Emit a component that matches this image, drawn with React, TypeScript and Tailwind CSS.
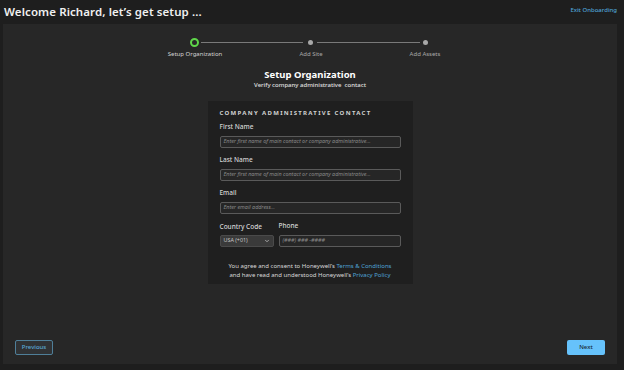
import { ChevronDown } from "lucide-react";

const font = { fontFamily: '"Noto Sans", "Open Sans", sans-serif' };

function Field({ label, placeholder }: { label: string; placeholder: string }) {
  return (
    <div className="flex flex-col">
      <label className="text-[6.5px] text-[#d6d6d6] font-medium h-[8px] leading-[8px]">{label}</label>
      <div className="mt-[5px] h-[12px] rounded-[2px] border border-[#5a5a5a] bg-[#262626] px-[3px] flex items-center">
        <span className="text-[5.4px] italic text-[#8a8a8a] leading-none">{placeholder}</span>
      </div>
    </div>
  );
}

export default function App() {
  return (
    <div style={font} className="w-[624px] h-[370px] bg-[#1e1e1e] flex flex-col overflow-hidden">
      <header className="h-[24px] flex items-center justify-between pl-[4px] pr-[7px]">
        <h1 className="text-[11.5px] font-semibold text-[#f0f0f0] tracking-[0.1px]">
          Welcome Richard, let’s get setup ...
        </h1>
        <a className="text-[6px] font-medium text-[#4fa3d6] mt-[-3px]">Exit Onboarding</a>
      </header>

      <main className="ml-[3px] mr-[7px] h-[340px] bg-[#272727] flex flex-col relative">
        {/* stepper */}
        <div className="mt-[14px] flex justify-center">
          <div className="relative w-[300px] h-[24px]">
            <div className="absolute left-[41px] top-[4px] w-[102px] h-px bg-[#7a7a7a]" />
            <div className="absolute left-[157px] top-[4px] w-[103px] h-px bg-[#7a7a7a]" />
            <div className="absolute left-[30px] top-0 w-[9px] h-[9px] rounded-full border-[2px] border-[#5fd64a] bg-[#272727]" />
            <div className="absolute left-[148px] top-[2px] w-[5px] h-[5px] rounded-full bg-[#a8a8a8]" />
            <div className="absolute left-[263px] top-[2px] w-[5px] h-[5px] rounded-full bg-[#a8a8a8]" />
            <span className="absolute top-[12px] left-[-5px] w-[80px] text-center text-[6px] text-[#d4d4d4]">Setup Organization</span>
            <span className="absolute top-[12px] left-[111px] w-[80px] text-center text-[6px] text-[#a8a8a8]">Add Site</span>
            <span className="absolute top-[12px] left-[225px] w-[80px] text-center text-[6px] text-[#a8a8a8]">Add Assets</span>
          </div>
        </div>

        <div className="mt-[7px] flex flex-col items-center">
          <h2 className="text-[9.5px] font-bold text-white leading-[12px]">Setup Organization</h2>
          <p className="text-[6px] font-medium text-[#e0e0e0] leading-[9px]">Verify company administrative&nbsp; contact</p>
        </div>

        {/* card */}
        <div className="mt-[11px] self-center w-[205px] h-[183px] bg-[#1f1f1f] px-[12px] pt-[8px] flex flex-col">
          <h3 className="text-[6px] font-bold tracking-[0.22em] text-[#d0d0d0] leading-[8px]">
            COMPANY ADMINISTRATIVE CONTACT
          </h3>
          <div className="mt-[6px] flex flex-col gap-[8px]">
            <Field label="First Name" placeholder="Enter first name of main contact or company administrative..." />
            <Field label="Last Name" placeholder="Enter first name of main contact or company administrative..." />
            <Field label="Email" placeholder="Enter email address..." />
            <div className="flex gap-[5px]">
              <div className="flex flex-col w-[54px]">
                <label className="text-[6.5px] text-[#d6d6d6] font-medium h-[8px] leading-[8px] mt-[1px]">Country Code</label>
                <div className="mt-[4px] h-[12px] rounded-[2px] bg-[#3a3a3a] border border-[#4a4a4a] px-[3px] flex items-center justify-between">
                  <span className="text-[5.4px] text-[#c8c8c8] leading-none">USA (+01)</span>
                  <ChevronDown className="w-[6px] h-[6px] text-[#c8c8c8]" strokeWidth={3} />
                </div>
              </div>
              <div className="flex flex-col flex-1">
                <label className="text-[6.5px] text-[#d6d6d6] font-medium h-[8px] leading-[8px]">Phone</label>
                <div className="mt-[5px] h-[12px] rounded-[2px] border border-[#5a5a5a] bg-[#262626] px-[3px] flex items-center">
                  <span className="text-[5.4px] italic text-[#8a8a8a] leading-none">(###) ### -####</span>
                </div>
              </div>
            </div>
          </div>
          <p className="mt-[15px] text-center text-[6px] leading-[8.5px] text-[#d8d8d8]">
            You agree and consent to Honeywell’s <span className="text-[#4fa3d6]">Terms &amp; Conditions</span>
            <br />
            and have read and understood Honeywell’s <span className="text-[#4fa3d6]">Privacy Policy</span>
          </p>
        </div>

        <div className="mt-auto mb-[9px] px-[12px] flex justify-between items-end">
          <button className="w-[38px] h-[15px] rounded-[2px] border border-[#4f7f99] bg-[#303234] text-[6px] text-[#5aa9d6] font-medium">
            Previous
          </button>
          <button className="w-[38px] h-[15px] rounded-[2px] bg-[#66c2fb] text-[6px] text-[#1a2a36] font-medium">
            Next
          </button>
        </div>
      </main>
    </div>
  );
}
